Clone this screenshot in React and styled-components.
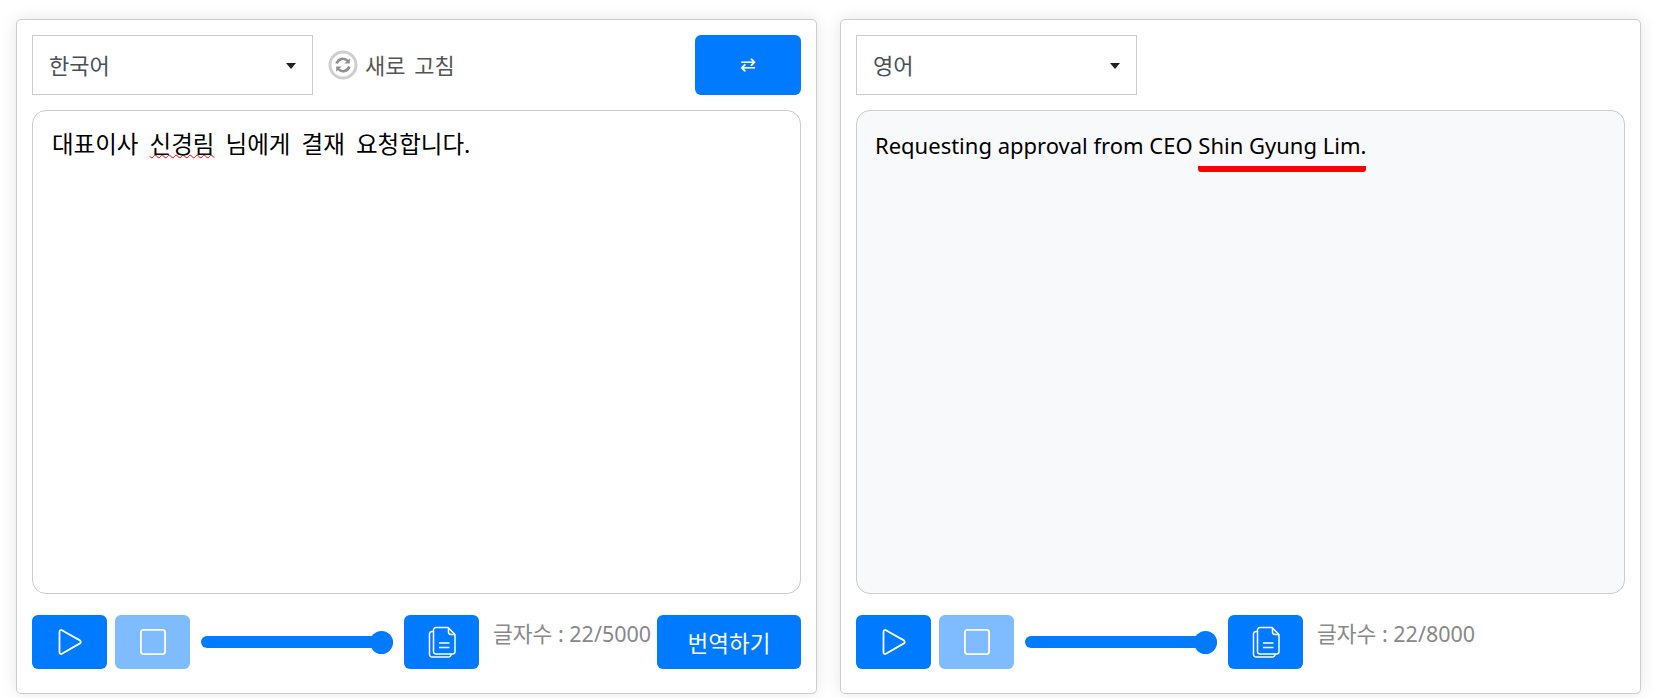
import styled, { createGlobalStyle } from 'styled-components';

const GlobalStyle = createGlobalStyle`
  html, body {
    margin: 0;
    padding: 0;
    background: #fff;
  }

  body {
    font-family: "Noto Sans", "Noto Sans CJK KR", sans-serif;
  }

  * {
    box-sizing: border-box;
  }
`;

function PlayIcon() {
  return (
    <svg width="26" height="28" viewBox="0 0 26 28" fill="none" stroke="#fff" strokeWidth="1.8" strokeLinejoin="round">
      <path d="M2.5 3.6c0-1.3 1.3-2 2.4-1.4l18 10.2c1.1.7 1.1 2.4 0 3L4.9 25.8c-1.1.6-2.4-.1-2.4-1.4z" />
    </svg>
  );
}

function StopIcon() {
  return (
    <svg width="28" height="28" viewBox="0 0 28 28" fill="none" stroke="#fff" strokeWidth="1.8">
      <rect x="1.9" y="1.9" width="24.2" height="24.2" rx="2.5" />
    </svg>
  );
}

function CopyIcon() {
  return (
    <svg width="28" height="32" viewBox="0 0 28 32" fill="none" stroke="#fff" strokeWidth="1.5" strokeLinejoin="round">
      <path d="M8 1.5h12l7 7v17a2.5 2.5 0 0 1-2.5 2.5H8a2.5 2.5 0 0 1-2.5-2.5V4A2.5 2.5 0 0 1 8 1.5z" />
      <path d="M20.5 1.8V6a2.5 2.5 0 0 0 2.5 2.5h3.8" />
      <path d="M5.5 5.5H4A2.5 2.5 0 0 0 1.5 8v20.5A2.5 2.5 0 0 0 4 31h16.5a2.5 2.5 0 0 0 2.5-2.5V28" />
      <path d="M11 17h10.5M11 21.5h10.5" />
    </svg>
  );
}

function RefreshIcon() {
  return (
    <svg width="30" height="30" viewBox="0 0 30 30" fill="none">
      <circle cx="15" cy="15" r="13" stroke="#cfcfcf" strokeWidth="3" />
      <path d="M8.6 13.5A6.6 6.6 0 0 1 19.8 11" stroke="#8f8f8f" strokeWidth="2.6" />
      <path d="M21.4 16.5A6.6 6.6 0 0 1 10.2 19" stroke="#8f8f8f" strokeWidth="2.6" />
      <path d="M21.8 8.2v5.4h-5.4z" fill="#8f8f8f" />
      <path d="M8.2 21.8v-5.4h5.4z" fill="#8f8f8f" />
    </svg>
  );
}

function LanguageSelect({ label }) {
  return (
    <SelectBox type="button">
      {label}
      <Caret />
    </SelectBox>
  );
}

function App() {
  return (
    <>
      <GlobalStyle />
      <Page>
        <Panel>
          <TopRow>
            <LanguageSelect label="한국어" />
            <RefreshLink type="button">
              <RefreshIcon />
              새로 고침
            </RefreshLink>
            <SwapButton type="button">⇄</SwapButton>
          </TopRow>
          <SourceText>
            대표이사 <Misspelled>신경림</Misspelled> 님에게 결재 요청합니다.
          </SourceText>
          <BottomRow>
            <IconButton type="button"><PlayIcon /></IconButton>
            <IconButton type="button" disabled><StopIcon /></IconButton>
            <Slider type="range" min="0" max="100" defaultValue="100" />
            <IconButton type="button"><CopyIcon /></IconButton>
            <CharCount>글자수 : 22/5000</CharCount>
            <TranslateButton type="button">번역하기</TranslateButton>
          </BottomRow>
        </Panel>

        <Panel>
          <TopRow>
            <LanguageSelect label="영어" />
          </TopRow>
          <ResultText>
            Requesting approval from CEO <Highlight>Shin Gyung Lim.</Highlight>
          </ResultText>
          <BottomRow>
            <IconButton type="button"><PlayIcon /></IconButton>
            <IconButton type="button" disabled><StopIcon /></IconButton>
            <Slider type="range" min="0" max="100" defaultValue="100" />
            <IconButton type="button"><CopyIcon /></IconButton>
            <CharCount>글자수 : 22/8000</CharCount>
          </BottomRow>
        </Panel>
      </Page>
    </>
  );
}

export default App;

const Page = styled.div`
  display: grid;
  grid-template-columns: 801px 801px;
  gap: 23px;
  padding: 19px 12px 4px 16px;
  height: 698px;
  overflow: hidden;
`;

const Panel = styled.section`
  display: flex;
  flex-direction: column;
  height: 675px;
  padding: 15px 15px 0;
  background: #fff;
  border: 1px solid #ccc;
  border-radius: 5px;
  box-shadow: 0 0 16px rgba(0, 0, 0, 0.1);
`;

const TopRow = styled.div`
  display: flex;
  align-items: center;
  height: 60px;
  margin-bottom: 15px;
`;

const SelectBox = styled.button`
  position: relative;
  width: 281px;
  height: 60px;
  padding: 0 16px 3px;
  background: #fff;
  border: 1px solid #ccc;
  color: #495057;
  font: inherit;
  font-size: 22px;
  text-align: left;
`;

const Caret = styled.span`
  position: absolute;
  top: 27px;
  right: 16px;
  border-top: 6px solid #212121;
  border-left: 5px solid transparent;
  border-right: 5px solid transparent;
`;

const RefreshLink = styled.button`
  display: flex;
  align-items: center;
  gap: 7px;
  margin-left: 15px;
  padding: 0;
  background: none;
  border: 0;
  color: #555;
  font: inherit;
  font-size: 22px;
  line-height: 26px;
  word-spacing: 3px;
`;

const SwapButton = styled.button`
  width: 106px;
  height: 60px;
  margin-left: auto;
  padding: 0 0 3px;
  background: #007bff;
  border: 0;
  border-radius: 6px;
  color: #fff;
  font-family: "DejaVu Sans", sans-serif;
  font-size: 19px;
`;

const TextBox = styled.div`
  height: 484px;
  border: 1px solid #ccc;
  border-radius: 14px;
  color: #000;
  line-height: 30px;
`;

const SourceText = styled(TextBox)`
  padding: 18px 19px;
  background: #fff;
  font-size: 23.5px;
  word-spacing: 5px;
`;

const ResultText = styled(TextBox)`
  padding: 19px 18px;
  background: #f8f9fa;
  font-size: 22px;
`;

const Misspelled = styled.span`
  text-decoration: underline wavy #f00;
  text-decoration-thickness: 1.2px;
  text-underline-offset: 1px;
`;

const Highlight = styled.span`
  padding-bottom: 6px;
  border-bottom: 6px solid #f00;
  border-radius: 3px;
`;

const BottomRow = styled.div`
  display: flex;
  align-items: flex-start;
  margin-top: 21px;
`;

const IconButton = styled.button`
  display: flex;
  align-items: center;
  justify-content: center;
  flex: none;
  width: 75px;
  height: 54px;
  margin-right: 8px;
  padding: 0;
  background: #007bff;
  border: 0;
  border-radius: 6px;
  opacity: ${({ disabled }) => (disabled ? 0.5 : 1)};
`;

const Slider = styled.input`
  flex: none;
  width: 192px;
  height: 54px;
  margin: 0 11px 0 3px;
  background: transparent;
  appearance: none;

  &::-webkit-slider-runnable-track {
    height: 12px;
    background: #007bff;
    border-radius: 6px;
  }

  &::-webkit-slider-thumb {
    width: 23px;
    height: 23px;
    margin-top: -5.5px;
    background: #007bff;
    border-radius: 50%;
    appearance: none;
  }
`;

const CharCount = styled.span`
  margin: 5px 0 0 6px;
  color: #888;
  font-size: 21.5px;
  line-height: 28px;
  white-space: nowrap;
`;

const TranslateButton = styled.button`
  width: 144px;
  height: 54px;
  margin-left: auto;
  background: #007bff;
  border: 0;
  border-radius: 6px;
  color: #fff;
  font: inherit;
  font-size: 22.5px;
`;
